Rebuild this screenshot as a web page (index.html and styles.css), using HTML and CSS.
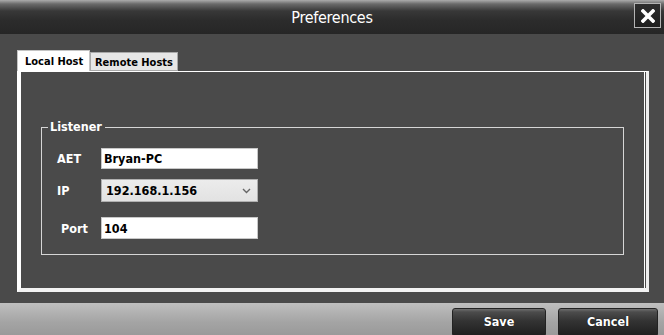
FILE: index.html
```html
<!DOCTYPE html>
<html>
<head>
<meta charset="utf-8">
<title>Preferences</title>
<link rel="stylesheet" href="styles.css">
</head>
<body>
<div class="window">
  <header class="titlebar">
    <div class="title">Preferences</div>
    <button class="close" aria-label="Close">
      <svg width="14" height="14" viewBox="0 0 14 14"><path d="M2 2 L12 12 M12 2 L2 12" stroke="#fff" stroke-width="3.6" stroke-linecap="square"/></svg>
    </button>
  </header>
  <main class="main">
    <div class="tabs">
      <div class="tab active">Local Host</div>
      <div class="tab">Remote Hosts</div>
    </div>
    <section class="panel">
      <fieldset class="group">
        <legend class="legend">Listener</legend>
        <div class="rows">
          <div class="row r1">
            <span class="label">AET</span>
            <input class="field" type="text" value="Bryan-PC">
          </div>
          <div class="row r2">
            <span class="label">IP</span>
            <div class="select">
              <span>192.168.1.156</span>
              <svg width="9" height="6" viewBox="0 0 9 6"><path d="M1 1 L4.5 4.5 L8 1" fill="none" stroke="#666" stroke-width="1.4"/></svg>
            </div>
          </div>
          <div class="row r3">
            <span class="label port">Port</span>
            <input class="field f3" type="text" value="104">
          </div>
        </div>
      </fieldset>
    </section>
  </main>
  <footer class="footer">
    <button class="btn save">Save</button>
    <button class="btn cancel">Cancel</button>
  </footer>
</div>
</body>
</html>
```
FILE: styles.css
```css
html, body {
  margin: 0;
  padding: 0;
}
body {
  width: 664px;
  height: 335px;
  overflow: hidden;
  background: #4a4a4a;
  font-family: "DejaVu Sans Condensed", "DejaVu Sans", sans-serif;
  font-weight: bold;
  font-size: 12.5px;
}
.window {
  display: flex;
  flex-direction: column;
  height: 335px;
}
.titlebar {
  height: 34px;
  flex: none;
  display: grid;
  grid-template-columns: 1fr auto 1fr;
  align-items: center;
  background: linear-gradient(#acacac 0, #6a6a6a 4px, #383838 11px, #2c2c2c 20px, #262626 100%);
}
.title {
  grid-column: 2;
  color: #fff;
  font-weight: normal;
  font-size: 16px;
  letter-spacing: -0.3px;
  margin-top: 1px;
}
.close {
  grid-column: 3;
  justify-self: end;
  align-self: start;
  margin: 3px 3px 0 0;
  width: 27px;
  height: 25px;
  padding: 0;
  border: 1px solid #b4b4b4;
  background: linear-gradient(#2e2e2e, #1e1e1e);
  display: flex;
  align-items: center;
  justify-content: center;
}
.main {
  flex: 1;
  display: flex;
  flex-direction: column;
  padding: 16px 15px 11px 17px;
}
.tabs {
  display: flex;
  align-items: flex-end;
  height: 21px;
  flex: none;
}
.tab {
  box-sizing: border-box;
  font-size: 11px;
  color: #000;
  display: flex;
  align-items: center;
}
.tab.active {
  width: 73px;
  height: 21px;
  background: #fff;
  border: 1px solid #c4c4c4;
  border-bottom: none;
  padding-left: 7px;
}
.tab:not(.active) {
  width: 88px;
  height: 19px;
  background: #e6e6e6;
  border: 1px solid #a8a8a8;
  padding-left: 4px;
  padding-top: 1px;
}
.panel {
  flex: 1;
  border-style: solid;
  border-color: #fff;
  border-width: 1px 3px 4px 4px;
  border-right-color: #ededed;
  border-bottom-color: #f2f2f2;
  box-shadow: inset -1px 0 0 #4a4a4a, inset -2px 0 0 #fff;
  padding: 0 22px 0 20px;
}
.group {
  margin: 47px 0 0 0;
  border: 1px solid #d6d6d6;
  padding: 13px 0 15px 6px;
}
.legend {
  color: #fff;
  padding: 0 3px 0 2px;
  line-height: 16px;
  font-size: 12.5px;
}
.rows {
  padding-left: 9px;
  display: flex;
  flex-direction: column;
}
.row {
  display: flex;
  align-items: center;
}
.r2 { margin-top: 10px; }
.r3 { margin-top: 15px; }
.label {
  width: 44px;
  color: #fff;
}
.label.port {
  box-sizing: border-box;
  padding-left: 4px;
}
.field {
  box-sizing: border-box;
  width: 157px;
  height: 21px;
  margin: 0;
  border: 1px solid #c8c8c8;
  background: #fff;
  padding: 0 2px;
  font-family: inherit;
  font-weight: bold;
  font-size: 12.5px;
  color: #000;
  outline: none;
}
.field.f3 { height: 22px; }
.select {
  box-sizing: border-box;
  width: 157px;
  height: 23px;
  border: 1px solid #b0b0b0;
  background: linear-gradient(#ececec, #e2e2e2);
  display: flex;
  align-items: center;
  justify-content: space-between;
  padding: 0 6px 0 4px;
  color: #000;
}
.footer {
  height: 32px;
  flex: none;
  box-sizing: border-box;
  overflow: hidden;
  display: flex;
  justify-content: flex-end;
  align-items: flex-start;
  gap: 12px;
  padding: 5px 6px 0 0;
  background: linear-gradient(#bfbfbf, #a4a4a4 60%, #9a9a9a);
}
.btn {
  height: 29px;
  margin: 0;
  border: 1px solid #222;
  border-radius: 3px;
  background: linear-gradient(#6e6e6e 0, #4c4c4c 3px, #333 45%, #1e1e1e 100%);
  color: #fff;
  font-family: inherit;
  font-weight: bold;
  font-size: 12.5px;
  padding: 0 0 3px 0;
  text-shadow: 0 0 1px #000;
}
.save { width: 94px; }
.cancel { width: 100px; }
```
